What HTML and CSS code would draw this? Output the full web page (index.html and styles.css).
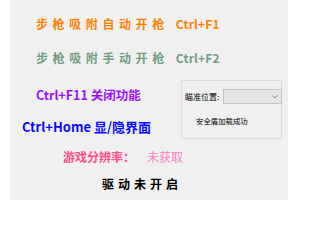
FILE: index.html
```html
<!DOCTYPE html>
<html lang="zh-CN">
<head>
<meta charset="utf-8">
<link rel="stylesheet" href="styles.css">
</head>
<body>
<div class="window">
  <div class="line l1">步枪吸附自动开枪<span class="key">Ctrl+F1</span></div>
  <div class="line l2">步枪吸附手动开枪<span class="key">Ctrl+F2</span></div>
  <div class="mid">
    <div class="left">
      <div class="line l3">Ctrl+F11 关闭功能</div>
      <div class="line l4">Ctrl+Home 显/隐界面</div>
    </div>
    <div class="group">
      <div class="aim">
        <span class="aim-label">瞄准位置:</span>
        <div class="combo">
          <svg class="chev" width="6" height="4" viewBox="0 0 6 4"><polyline points="0.5,0.5 3,3 5.5,0.5" fill="none" stroke="#707070" stroke-width="0.9"/></svg>
        </div>
      </div>
      <div class="shield">安全盾加载成功</div>
    </div>
  </div>
  <div class="line l5"><span class="res">游戏分辨率：</span><span class="resv">未获取</span></div>
  <div class="line l6">驱动未开启</div>
</div>
</body>
</html>
```
FILE: styles.css
```css
html, body {
  margin: 0;
  padding: 0;
  background: #ffffff;
}
body {
  font-family: "Noto Sans CJK SC", "Noto Sans", sans-serif;
}
.window {
  margin-left: 10px;
  width: 278px;
  height: 200px;
  background: #f0f0f0;
  display: flex;
  flex-direction: column;
  overflow: hidden;
}
.line {
  height: 20px;
  line-height: 20px;
  font-weight: bold;
  white-space: nowrap;
}
.l1, .l2 {
  font-size: 12px;
  letter-spacing: 4.6px;
  padding-left: 26px;
}
.l1 { margin-top: 14px; color: #ff8000; }
.l2 { margin-top: 14px; color: #6f9f7f; }
.key {
  letter-spacing: 0.2px;
  margin-left: 7px;
}
.mid {
  margin-top: 12px;
  display: flex;
  height: 59px;
}
.left {
  width: 171px;
  padding-top: 5px;
  display: flex;
  flex-direction: column;
  gap: 12px;
}
.l3 {
  font-size: 12.5px;
  color: #9b10ff;
  padding-left: 26px;
}
.l4 {
  font-size: 13px;
  color: #0a0aff;
  padding-left: 12px;
}
.group {
  width: 99px;
  height: 57px;
  border: 1px solid #dcdcdc;
  display: flex;
  flex-direction: column;
}
.aim {
  margin-top: 8px;
  display: flex;
  align-items: center;
  height: 15px;
}
.aim-label {
  padding-left: 3px;
  font-size: 8px;
  color: #000;
}
.combo {
  margin-left: auto;
  margin-right: -1px;
  width: 54px;
  height: 13px;
  background: #e5e5e5;
  border: 1px solid #c4c4c4;
  display: flex;
  align-items: center;
  justify-content: flex-end;
  padding-right: 3px;
  box-sizing: content-box;
}
.chev { display: block; }
.shield {
  margin-top: 11px;
  padding-left: 14px;
  font-size: 7.4px;
  color: #000;
}
.l5 {
  margin-top: 8px;
  font-size: 12px;
  padding-left: 53px;
}
.res { color: #ff4f86; }
.resv { color: #ff80c0; margin-left: 12px; font-weight: normal; }
.l6 {
  margin-top: 7px;
  font-size: 12px;
  color: #000;
  letter-spacing: 4px;
  padding-left: 92px;
}
```
